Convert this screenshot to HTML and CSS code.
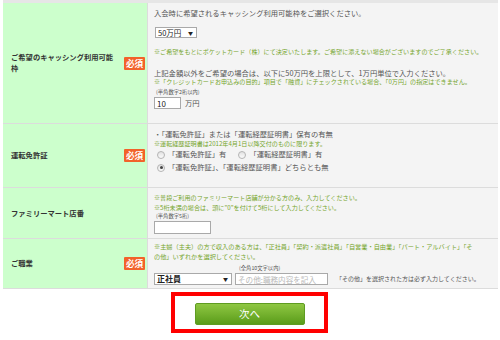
FILE: index.html
```html
<!DOCTYPE html>
<html lang="ja">
<head>
<meta charset="utf-8">
<title>お申込みフォーム</title>
<link rel="stylesheet" href="styles.css">
</head>
<body>
<div class="page">
  <div class="form">
    <div class="label"><span class="label-text">ご希望のキャッシング利用可能枠</span><span class="req">必須</span></div>
    <div class="cell cell-limit">
      <p class="main">入会時に希望されるキャッシング利用可能枠をご選択ください。</p>
      <div class="select sel-limit"><span class="sel-text">50万円</span><span class="arrow">▼</span></div>
      <p class="note note-a">※ご希望をもとにポケットカード（株）にて決定いたします。ご希望に添えない場合がございますのでご了承ください。</p>
      <p class="main main-b">上記金額以外をご希望の場合は、以下に50万円を上限として、1万円単位で入力ください。</p>
      <p class="note">※「クレジットカードお申込みの目的」項目で「融資」にチェックされている場合、「0万円」の指定はできません。</p>
      <p class="tiny tiny-a">(半角数字2桁以内)</p>
      <div class="amount"><input class="text-input in-amount" type="text" value="10"><span class="main unit">万円</span></div>
    </div>

    <div class="label"><span class="label-text">運転免許証</span><span class="req">必須</span></div>
    <div class="cell cell-license">
      <p class="main">・「運転免許証」または「運転経歴証明書」保有の有無</p>
      <p class="note note-c">※運転経歴証明書は2012年4月1日以降交付のものに限ります。</p>
      <div class="radio-line">
        <span class="radio"></span><span class="radio-label first">「運転免許証」有</span>
        <span class="radio"></span><span class="radio-label">「運転経歴証明書」有</span>
      </div>
      <div class="radio-line">
        <span class="radio checked"></span><span class="radio-label">「運転免許証」、「運転経歴証明書」どちらとも無</span>
      </div>
    </div>

    <div class="label"><span class="label-text">ファミリーマート店番</span></div>
    <div class="cell cell-store">
      <p class="note note-s">※普段ご利用のファミリーマート店舗が分かる方のみ、入力してください。</p>
      <p class="note note-s">※5桁未満の場合は、頭に"0"を付けて5桁にして入力してください。</p>
      <p class="tiny tiny-s">(半角数字5桁)</p>
      <input class="text-input in-store" type="text">
    </div>

    <div class="label"><span class="label-text">ご職業</span><span class="req">必須</span></div>
    <div class="cell cell-job">
      <p class="note note-j">※主婦（主夫）の方で収入のある方は、「正社員」「契約・派遣社員」「自営業・自由業」「パート・アルバイト」「そ<br>の他」いずれかを選択してください。</p>
      <p class="tiny tiny-j">(全角10文字以内)</p>
      <div class="job-line">
        <div class="select sel-job"><span class="sel-text">正社員</span><span class="arrow">▼</span></div>
        <input class="text-input in-job" type="text" placeholder="その他:職務内容を記入">
        <span class="job-note">「その他」を選択された方は必ず入力してください。</span>
      </div>
    </div>
  </div>

  <div class="actions">
    <div class="highlight">
      <button class="next" type="button">次へ</button>
    </div>
  </div>
</div>
</body>
</html>
```

FILE: styles.css
```css
* {
  box-sizing: border-box;
  margin: 0;
  padding: 0;
}

html,
body {
  background: #ffffff;
}

body {
  width: 500px;
  height: 340px;
  overflow: hidden;
  font-family: "Noto Sans CJK JP", "Noto Sans", sans-serif;
  color: #555555;
}

.page {
  padding: 0 2px 0 3px;
}

.form {
  display: grid;
  grid-template-columns: 144px 1fr;
  gap: 1px;
  background: #dcdcdc;
  border-top: 3px solid #e6e6e6;
  border-bottom: 1px solid #dcdcdc;
}

.label {
  display: flex;
  align-items: center;
  justify-content: space-between;
  background: #ccffcc;
  padding: 0 2px 0 8px;
}

.label-text {
  max-width: 105px;
  font-size: 7.3px;
  line-height: 11px;
  font-weight: 700;
  color: #333333;
}

.req {
  width: 21px;
  height: 13px;
  background: #f2622a;
  color: #ffffff;
  font-size: 8.6px;
  font-weight: 700;
  line-height: 13px;
  text-align: center;
  border-radius: 1px;
}

.cell {
  background: #f4f4f4;
  padding-left: 6px;
}

.main {
  font-size: 7.3px;
  line-height: 10px;
  white-space: nowrap;
}

.note {
  font-size: 6.1px;
  line-height: 8px;
  color: #74a52c;
  white-space: nowrap;
}

.tiny {
  font-size: 5.3px;
  line-height: 8px;
  color: #555555;
  white-space: nowrap;
}

/* row 1 */
.cell-limit {
  padding-top: 5px;
  padding-bottom: 14px;
}

.select {
  display: flex;
  align-items: center;
  justify-content: space-between;
  background: #ffffff;
  border: 1px solid #a9a9a9;
  color: #222222;
  font-size: 7.5px;
  padding: 0 3px 0 2px;
}

.arrow {
  font-size: 5px;
  color: #222222;
}

.sel-limit {
  width: 42px;
  height: 11px;
  margin-top: 9px;
  margin-left: 1px;
  line-height: 9px;
}

.note-a {
  margin-top: 10px;
}

.main-b {
  margin-top: 12px;
}

.tiny-a {
  margin-top: 2px;
  padding-left: 2px;
}

.amount {
  display: flex;
  align-items: center;
  gap: 4px;
  margin-top: 1px;
}

.text-input {
  display: block;
  background: #ffffff;
  border: 1px solid #a9a9a9;
  font-family: "Noto Sans CJK JP", "Noto Sans", sans-serif;
  color: #222222;
  outline: none;
}

.in-amount {
  width: 27px;
  height: 12px;
  font-size: 8px;
  padding: 0 2px;
}

.unit {
  line-height: 12px;
}

/* row 2 */
.cell-license {
  padding-top: 5px;
  padding-bottom: 13px;
}

.note-c {
  margin-top: 1px;
}

.radio-line {
  display: flex;
  align-items: center;
  height: 13px;
  padding-left: 3px;
}

.radio {
  position: relative;
  width: 8px;
  height: 8px;
  border-radius: 50%;
  border: 1px solid #b4b4b4;
  background: linear-gradient(#e2e2e2, #fbfbfb);
  flex: none;
}

.radio.checked::after {
  content: "";
  position: absolute;
  left: 1.5px;
  top: 1.5px;
  width: 3px;
  height: 3px;
  border-radius: 50%;
  background: #444444;
}

.radio-label {
  font-size: 7.3px;
  line-height: 13px;
  margin-left: 3px;
  white-space: nowrap;
}

.radio-label.first {
  margin-right: 12px;
}

/* row 3 */
.cell-store {
  padding-top: 5px;
  padding-bottom: 4px;
}

.note-s {
  line-height: 9.5px;
}

.tiny-s {
  line-height: 9px;
  padding-left: 2px;
}

.in-store {
  width: 57px;
  height: 13px;
}

/* row 4 */
.cell-job {
  padding-top: 3px;
  padding-bottom: 3px;
}

.note-j {
  font-size: 6.2px;
  line-height: 10px;
}

.tiny-j {
  margin-top: 1.5px;
  padding-left: 85px;
}

.job-line {
  display: flex;
  align-items: center;
  margin-top: 1.5px;
}

.sel-job {
  width: 78px;
  height: 12px;
  line-height: 10px;
  font-size: 8px;
  font-weight: 700;
}

.in-job {
  width: 93px;
  height: 12px;
  margin-left: 3px;
  font-size: 7.6px;
  padding: 0 2px;
}

.in-job::placeholder {
  color: #b8b8b8;
}

.job-note {
  margin-left: 8px;
  font-size: 6px;
  line-height: 10px;
  color: #555555;
  white-space: nowrap;
}

/* actions */
.actions {
  display: flex;
  justify-content: center;
  margin-top: 3px;
  padding-right: 2px;
}

.highlight {
  width: 157px;
  height: 41px;
  border: 4px solid #ff0000;
  display: flex;
  justify-content: center;
  padding-top: 7px;
}

.next {
  width: 110px;
  height: 22px;
  border: 1px solid #5f9c22;
  border-radius: 2px;
  background: linear-gradient(#8fc743, #5a9c1a);
  color: #ffffff;
  font-family: "Noto Sans CJK JP", "Noto Sans", sans-serif;
  font-size: 10.5px;
  line-height: 20px;
}
```
